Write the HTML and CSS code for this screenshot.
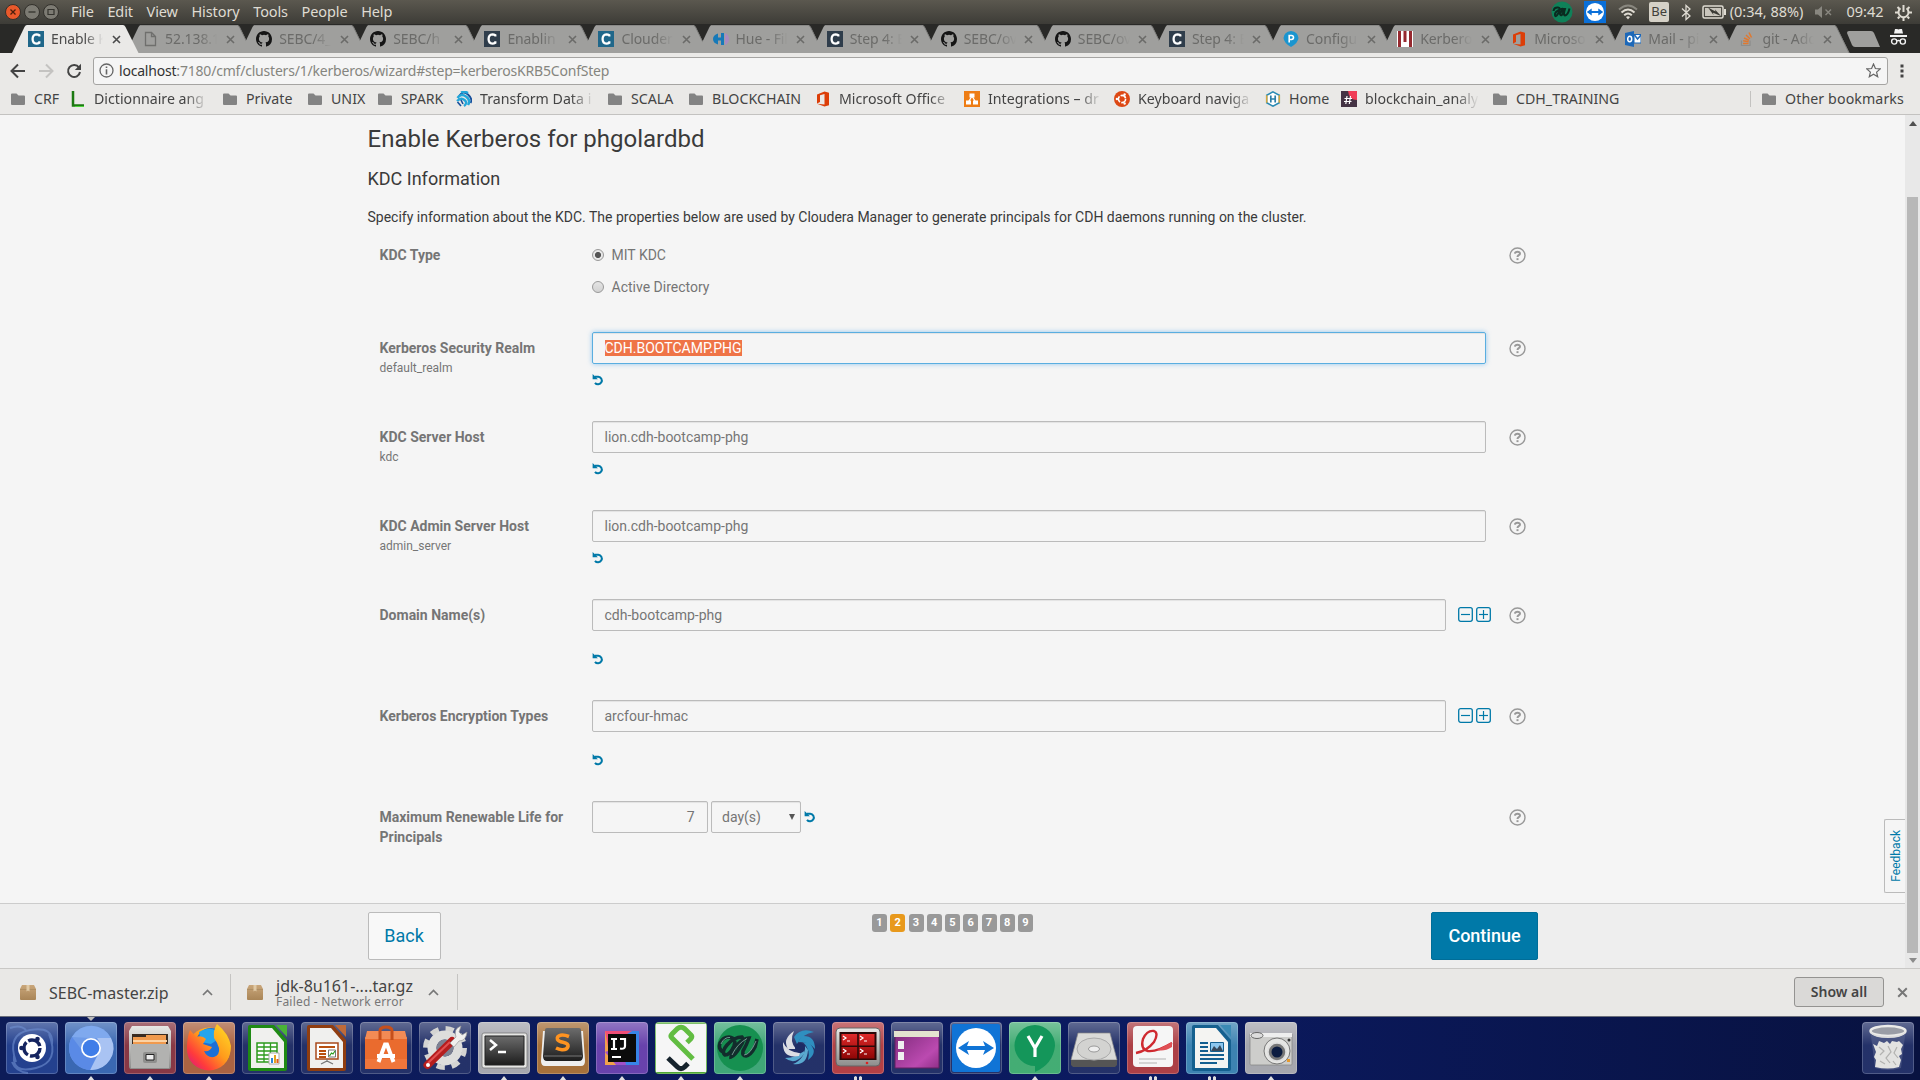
FILE: index.html
```html
<!DOCTYPE html>
<html lang="en">
<head>
<meta charset="utf-8">
<title>Enable Kerberos</title>
<link rel="stylesheet" href="styles.css">
</head>
<body>
<svg class="defs" aria-hidden="true">
  <defs>
    <linearGradient id="metal" x1="0" y1="0" x2="0" y2="1"><stop offset="0" stop-color="#e8e8e6"/><stop offset="1" stop-color="#8d8d8b"/></linearGradient>
    <linearGradient id="dark" x1="0" y1="0" x2="0" y2="1"><stop offset="0" stop-color="#6c6c6c"/><stop offset="1" stop-color="#1d1d1d"/></linearGradient>
    <linearGradient id="fox" x1="1" y1="0" x2="0" y2="1"><stop offset="0" stop-color="#ffe226"/><stop offset=".45" stop-color="#ff9a1c"/><stop offset=".75" stop-color="#ff3b3b"/><stop offset="1" stop-color="#d2118f"/></linearGradient>
    <linearGradient id="desk" x1="0" y1="0" x2="1" y2="1"><stop offset="0" stop-color="#7e2a7a"/><stop offset=".7" stop-color="#bb4ab0"/><stop offset="1" stop-color="#8f2f88"/></linearGradient>
    <linearGradient id="box" x1="0" y1="0" x2="0" y2="1"><stop offset="0" stop-color="#c9a67a"/><stop offset="1" stop-color="#a98557"/></linearGradient>
    <linearGradient id="red" x1="0" y1="0" x2="0" y2="1"><stop offset="0" stop-color="#e02a2a"/><stop offset="1" stop-color="#8e0606"/></linearGradient>
  </defs>
  <symbol id="tab" viewBox="0 0 127 28"><path d="M0 28 12.500 2Q13.500 0 15 0H111Q112.500 0 113.500 2L126.500 28Z" fill="#9f9f9d"/><path d="M111 .5Q112.500.5 113.500 2L126 28" fill="none" stroke="#7f7f7d"/><path d="M14 .5H112" stroke="#8a8a88"/></symbol>
  <symbol id="tab-on" viewBox="0 0 127 28"><path d="M0 28 12.500 2Q13.500 0 15 0H111Q112.500 0 113.500 2L126.500 28Z" fill="#eae9e7"/></symbol>
  <symbol id="x" viewBox="0 0 9 9"><path d="M1 1 8 8M8 1 1 8" fill="none" stroke="currentColor" stroke-width="1.600"/></symbol>
  <symbol id="folder" viewBox="0 0 16 16"><path d="M1 3.500Q1 2.500 2 2.500H6.500L8.500 4.500H14Q15 4.500 15 5.500V13Q15 14 14 14H2Q1 14 1 13Z" fill="#838383"/></symbol>
  <symbol id="cloudera" viewBox="0 0 16 16"><path d="M0 0H16V16H0Z" fill="currentColor"/><path d="M11.300 5.600V4.200Q10 3.300 8.400 3.300 4.600 3.600 4.600 8T8.400 12.700Q10 12.700 11.300 11.800V10.300" fill="none" stroke="#fff" stroke-width="2.300"/></symbol>
  <symbol id="github" viewBox="0 0 16 16"><path fill="#151515" d="M8 0C3.580 0 0 3.580 0 8c0 3.540 2.290 6.530 5.470 7.590.4.070.55-.17.55-.38 0-.19-.01-.82-.01-1.490-2.010.37-2.530-.49-2.690-.94-.09-.23-.48-.94-.82-1.130-.28-.15-.68-.52-.01-.53.63-.01 1.080.58 1.230.82.72 1.210 1.870.87 2.330.66.07-.52.28-.87.51-1.070-1.780-.2-3.640-.89-3.640-3.950 0-.87.31-1.590.82-2.150-.08-.2-.36-1.020.08-2.120 0 0 .67-.21 2.200.82a7.600 7.600 0 0 1 4 0c1.530-1.040 2.200-.82 2.200-.82.44 1.100.16 1.920.08 2.120.51.56.82 1.270.82 2.150 0 3.070-1.870 3.750-3.650 3.950.29.25.54.73.54 1.480 0 1.070-.01 1.930-.01 2.200 0 .21.15.46.55.38A8.010 8.010 0 0 0 16 8c0-4.420-3.580-8-8-8z"/></symbol>
  <symbol id="office" viewBox="0 0 16 16"><path d="M2 3.500 9.500.5 14 1.800V14.300L9.500 15.500 2 12.700 9.500 13.500V3L5 4.200V11L2 12.400Z" fill="#dc3e08"/></symbol>
  <symbol id="undo" viewBox="0 0 12 12"><path d="M2.800 3.200H6.300A3.800 3.800 0 1 1 3 9.300" fill="none" stroke="#0079a8" stroke-width="2"/><path d="M.6.500V5.800H5.900Z" fill="#0079a8"/></symbol>
  <symbol id="help" viewBox="0 0 17 17"><circle cx="8.500" cy="8.500" r="7.500" fill="none" stroke="#999" stroke-width="1.400"/><path d="M5.900 6.700Q6.200 4.700 8.500 4.700T11 6.500Q11 7.500 9.700 8.200 8.500 8.900 8.500 10" fill="none" stroke="#999" stroke-width="2"/><path d="M7.500 11.200H9.500V13.100H7.500Z" fill="#999"/></symbol>
  <symbol id="minus" viewBox="0 0 15 15"><rect x=".7" y=".7" width="13.600" height="13.600" rx="2" fill="none" stroke="#0079a8" stroke-width="1.300"/><path d="M3 7.500H12" stroke="#0079a8" stroke-width="1.200"/></symbol>
  <symbol id="plus" viewBox="0 0 15 15"><use href="#minus"/><path d="M7.500 3V12" stroke="#0079a8" stroke-width="1.200"/></symbol>
  <symbol id="package" viewBox="0 0 16 15"><path d="M2 0H14L16 4V14Q16 15 15 15H1Q0 15 0 14V4Z" fill="url(#box)"/><path d="M0 4.500H16" stroke="#a5865c" stroke-width=".6"/><path d="M6.500 0H9.500V6.500L8 5.500 6.500 6.500Z" fill="#e0c9a5"/></symbol>
  <symbol id="caret" viewBox="0 0 11 7"><path d="M1 6 5.500 1.500 10 6" fill="none" stroke="#777" stroke-width="1.700"/></symbol>
  <symbol id="tv" viewBox="0 0 20 20"><path d="M0 0H20V20H0Z" fill="#0a6fd8"/><circle cx="10" cy="10" r="8.200" fill="#fff"/><path d="M2.500 10 7 6.800V9H13V6.800L17.500 10 13 13.200V11H7V13.200Z" fill="#0a6fd8"/></symbol>
</svg>

<div class="screen">
  <header class="menubar">
    <div class="win-buttons">
      <svg width="16" height="16" viewBox="0 0 16 16"><circle cx="8" cy="8" r="7.500" fill="#e9592b" stroke="#33312c"/><path d="M5.500 5.500 10.500 10.500M10.500 5.500 5.500 10.500" stroke="#4a1e0c" stroke-width="1.300"/></svg>
      <svg width="16" height="16" viewBox="0 0 16 16"><circle cx="8" cy="8" r="7.500" fill="#7d7b73" stroke="#33312c"/><path d="M4.500 8H11.500" stroke="#34332e" stroke-width="1.300"/></svg>
      <svg width="16" height="16" viewBox="0 0 16 16"><circle cx="8" cy="8" r="7.500" fill="#7d7b73" stroke="#33312c"/><path d="M5 5.500H11V10.500H5Z" fill="none" stroke="#34332e" stroke-width="1.200"/></svg>
    </div>
    <nav class="menus"><span>File</span><span>Edit</span><span>View</span><span>History</span><span>Tools</span><span>People</span><span>Help</span></nav>
    <div class="indicators">
      <svg width="22" height="22" viewBox="0 0 22 22"><circle cx="11" cy="11" r="10.500" fill="#0f8159"/><path d="M2.500 10Q3 6 7 6.500 10.500 7 7.500 12T4 14Q3.500 11 9 8.500T12 12Q10.500 16 9 13 11.500 7.500 14 8 12 14 14 14.500 17 14 18.500 7.500" fill="none" stroke="#0a2a20" stroke-width="2"/></svg>
      <svg width="22" height="22"><use href="#tv"/></svg>
      <svg width="20" height="16" viewBox="0 0 20 16"><g fill="none" stroke-width="1.900"><path d="M1 5.500Q10-2.500 19 5.500" stroke="#89877f"/><path d="M3.500 8.500Q10 2.500 16.500 8.500M6.200 11.300Q10 7.600 13.800 11.300" stroke="#dfdbd2"/></g><path d="M8 13Q10 11.400 12 13L10 15.500Z" fill="#dfdbd2"/></svg>
      <span class="kbd">Be</span>
      <svg width="10" height="17" viewBox="0 0 10 17"><path d="M1 4.500 9 12 5 15.500V1.500L9 5 1 12.500" fill="none" stroke="#dfdbd2" stroke-width="1.300"/></svg>
      <svg width="24" height="14" viewBox="0 0 24 14"><rect x="1" y="1" width="20" height="12" rx="1.500" fill="none" stroke="#dfdbd2" stroke-width="1.500"/><path d="M22 4V10H24V4Z" fill="#dfdbd2"/><path d="M3 3H19V11H3Z" fill="#c9c5bc"/><path d="M6 2.500 13.500 6.500 13 4.500 19 11 11 7.800 11.500 10Z" fill="#3a3934"/></svg>
      <span class="battery">(0:34, 88%)</span>
      <svg class="mute" width="18" height="14" viewBox="0 0 18 14"><path d="M0 4.500H3L7 1V13L3 9.500H0Z" fill="#898780"/><path d="M10.500 4.500 16 10M16 4.500 10.500 10" stroke="#898780" stroke-width="1.400"/></svg>
      <span class="clock">09:42</span>
      <svg width="17" height="17" viewBox="0 0 17 17"><path d="M8.500 1V8" stroke="#dfdbd2" stroke-width="2"/><path d="M5.500 4.300A5 5 0 1 0 11.500 4.300" fill="none" stroke="#dfdbd2" stroke-width="2"/><path d="M0 8.500H3.500M13.500 8.500H17M2.500 3 4.300 4.800M14.500 3 12.700 4.800M2.800 14.500 4.500 12.700M14.200 14.500 12.500 12.700M8.500 13.500V17" stroke="#dfdbd2" stroke-width="2"/></svg>
    </div>
  </header>

  <div class="tabstrip">
    <div class="tab active"><svg class="shape"><use href="#tab-on"/></svg><svg class="fav c-blue"><use href="#cloudera"/></svg><span>Enable K</span><svg class="close"><use href="#x"/></svg></div>
    <div class="tab"><svg class="shape"><use href="#tab"/></svg><svg class="fav" viewBox="0 0 16 16"><path d="M3.500 1.500H9.500L13.500 5.500V14.500H3.500ZM9.500 1.500V5.500H13.500" fill="none" stroke="#6f6f6d" stroke-width="1.300"/></svg><span>52.138.1</span><svg class="close"><use href="#x"/></svg></div>
    <div class="tab"><svg class="shape"><use href="#tab"/></svg><svg class="fav"><use href="#github"/></svg><span>SEBC/4_</span><svg class="close"><use href="#x"/></svg></div>
    <div class="tab"><svg class="shape"><use href="#tab"/></svg><svg class="fav"><use href="#github"/></svg><span>SEBC/h</span><svg class="close"><use href="#x"/></svg></div>
    <div class="tab"><svg class="shape"><use href="#tab"/></svg><svg class="fav c-dark"><use href="#cloudera"/></svg><span>Enablin</span><svg class="close"><use href="#x"/></svg></div>
    <div class="tab"><svg class="shape"><use href="#tab"/></svg><svg class="fav c-blue"><use href="#cloudera"/></svg><span>Clouder</span><svg class="close"><use href="#x"/></svg></div>
    <div class="tab"><svg class="shape"><use href="#tab"/></svg><svg class="fav" viewBox="0 0 16 16"><path d="M5 2.500Q0 4 0 8T5 13.500V9.500H8V14H11V2H8V6.500H5Z" fill="#1679b8"/><path d="M12 2Q16 4 16 8T12 14Z" fill="#a98bc0"/></svg><span>Hue - Fil</span><svg class="close"><use href="#x"/></svg></div>
    <div class="tab"><svg class="shape"><use href="#tab"/></svg><svg class="fav c-dark"><use href="#cloudera"/></svg><span>Step 4: E</span><svg class="close"><use href="#x"/></svg></div>
    <div class="tab"><svg class="shape"><use href="#tab"/></svg><svg class="fav"><use href="#github"/></svg><span>SEBC/ov</span><svg class="close"><use href="#x"/></svg></div>
    <div class="tab"><svg class="shape"><use href="#tab"/></svg><svg class="fav"><use href="#github"/></svg><span>SEBC/ov</span><svg class="close"><use href="#x"/></svg></div>
    <div class="tab"><svg class="shape"><use href="#tab"/></svg><svg class="fav c-dark"><use href="#cloudera"/></svg><span>Step 4: E</span><svg class="close"><use href="#x"/></svg></div>
    <div class="tab"><svg class="shape"><use href="#tab"/></svg><svg class="fav" viewBox="0 0 16 16"><path d="M8 0Q15 1 15.500 7 15 12 8 16 1 12 .5 7 1 1 8 0Z" fill="#1b95cf"/><path d="M6.200 11.500V4.500H8.500Q10.500 4.700 10.500 6.500T8.500 8.500H6.500" fill="none" stroke="#fff" stroke-width="1.600"/></svg><span>Configu</span><svg class="close"><use href="#x"/></svg></div>
    <div class="tab"><svg class="shape"><use href="#tab"/></svg><svg class="fav" viewBox="0 0 16 16"><path d="M0 0H16V16H0Z" fill="#fff"/><path d="M1 0H4V16H1ZM6.500 0H9.500V11H6.500ZM12 0H15V16H12Z" fill="#96292f"/></svg><span>Kerbero</span><svg class="close"><use href="#x"/></svg></div>
    <div class="tab"><svg class="shape"><use href="#tab"/></svg><svg class="fav"><use href="#office"/></svg><span>Microso</span><svg class="close"><use href="#x"/></svg></div>
    <div class="tab"><svg class="shape"><use href="#tab"/></svg><svg class="fav" viewBox="0 0 16 16"><path d="M0 2 9 0V16L0 14Z" fill="#1d68b8"/><path d="M9 3.500H16V12H9Z" fill="#fff" stroke="#1d68b8"/><path d="M9.500 4 12.500 8 16 4" fill="none" stroke="#1d68b8" stroke-width="1.500"/><ellipse cx="4.700" cy="8" rx="2" ry="2.700" fill="none" stroke="#fff" stroke-width="1.500"/></svg><span>Mail - pi</span><svg class="close"><use href="#x"/></svg></div>
    <div class="tab"><svg class="shape"><use href="#tab"/></svg><svg class="fav" viewBox="0 0 16 16"><path d="M2.500 9.500V14.500H11V9.500" fill="none" stroke="#8d8d8b" stroke-width="1.200"/><path d="M4 12.500H9.500M4.200 9.800 9.600 10.700M5 7 10 9.300M7 4 11 7.800M10 1.500 12.500 6.500" stroke="#e0782f" stroke-width="1.500"/></svg><span>git - Add</span><svg class="close"><use href="#x"/></svg></div>
    <svg class="newtab" width="33" height="16" viewBox="0 0 33 16"><path d="M2 0H24Q26 0 27 2L33 16H8Q6 16 5 14L0 2Q0 0 2 0Z" fill="#9f9f9d"/></svg>
    <svg class="incognito" width="17" height="18" viewBox="0 0 17 18"><path d="M5 1H7L8.500 1.500 10 1H12L13 5.500H4ZM0 7H17V9H0Z" fill="#f2f2f2"/><g fill="none" stroke="#f2f2f2" stroke-width="1.400"><circle cx="4.200" cy="13.500" r="2.600"/><circle cx="12.800" cy="13.500" r="2.600"/><path d="M6.800 13Q8.500 12 10.200 13"/></g></svg>
  </div>

  <div class="toolbar">
    <svg width="16" height="16" viewBox="0 0 16 16"><path d="M15 8H2M8 1.500 1.500 8 8 14.500" fill="none" stroke="#444" stroke-width="2"/></svg>
    <svg width="16" height="16" viewBox="0 0 16 16"><path d="M1 8H14M8 1.500 14.500 8 8 14.500" fill="none" stroke="#c4c3c1" stroke-width="2"/></svg>
    <svg width="16" height="16" viewBox="0 0 16 16"><path d="M13 4.500A6 6 0 1 0 14 9" fill="none" stroke="#444" stroke-width="2"/><path d="M15 .8V7H8.800Z" fill="#444"/></svg>
    <div class="omnibox">
      <svg width="15" height="15" viewBox="0 0 15 15"><circle cx="7.500" cy="7.500" r="6.500" fill="none" stroke="#666" stroke-width="1.300"/><path d="M6.700 3.500H8.300V5H6.700ZM6.700 6.300H8.300V11.500H6.700Z" fill="#666"/></svg>
      <span class="url"><b>localhost</b>:7180/cmf/clusters/1/kerberos/wizard#step=kerberosKRB5ConfStep</span>
      <svg width="15" height="15" viewBox="0 0 15 15"><path d="M7.500 1 9.400 5.500 14.200 5.900 10.600 9.100 11.700 13.800 7.500 11.300 3.300 13.800 4.400 9.100.8 5.900 5.600 5.500Z" fill="none" stroke="#666" stroke-width="1.200"/></svg>
    </div>
    <svg class="more" width="4" height="16" viewBox="0 0 4 16"><path d="M.5 1.500H3.500V4.500H.5ZM.5 6.500H3.500V9.500H.5ZM.5 11.500H3.500V14.500H.5Z" fill="#444"/></svg>
  </div>

  <div class="bookmarks">
    <div class="bm"><svg><use href="#folder"/></svg><span>CRF</span></div>
    <div class="bm"><svg viewBox="0 0 16 16"><path d="M3 0V14.500H14" fill="none" stroke="#1c7a12" stroke-width="2.500"/><path d="M5 15.500H14" stroke="#4cd63a"/></svg><span class="cut">Dictionnaire ang</span></div>
    <div class="bm"><svg><use href="#folder"/></svg><span>Private</span></div>
    <div class="bm"><svg><use href="#folder"/></svg><span>UNIX</span></div>
    <div class="bm"><svg><use href="#folder"/></svg><span>SPARK</span></div>
    <div class="bm"><svg viewBox="0 0 16 16"><path d="M3 5Q7-1 12 3.500T14.500 12" fill="none" stroke="#174f9b" stroke-width="1.800"/><path d="M1.500 7Q5 2 10 5.500T12 14M1 10Q5 6 8.500 9T8 15M5 1.500Q9 0 12 2" fill="none" stroke="#23a6d9" stroke-width="2.400"/><path d="M1.500 11 5 15M5 9 7 13" stroke="#174f9b" stroke-width="1.600"/></svg><span class="cut">Transform Data i</span></div>
    <div class="bm"><svg><use href="#folder"/></svg><span>SCALA</span></div>
    <div class="bm"><svg><use href="#folder"/></svg><span>BLOCKCHAIN</span></div>
    <div class="bm"><svg><use href="#office"/></svg><span class="cut">Microsoft Office</span></div>
    <div class="bm"><svg viewBox="0 0 16 16"><path d="M0 0H16V16H0Z" fill="#ee7d14"/><path d="M8 5 4.500 11M8 5 11.500 11" stroke="#fff" stroke-width="1.300"/><path d="M5.500 2.500H10.500V6.500H5.500ZM2 9.500H7V13.500H2ZM9 9.500H14V13.500H9Z" fill="#fff"/></svg><span class="cut">Integrations – dr</span></div>
    <div class="bm"><svg viewBox="0 0 16 16"><circle cx="8" cy="8" r="8" fill="#dd4814"/><circle cx="8" cy="8" r="3.600" fill="none" stroke="#fff" stroke-width="1.600" stroke-dasharray="6.300 1.240"/><g fill="#fff"><circle cx="2.900" cy="8" r="1.200"/><circle cx="10.600" cy="3.500" r="1.200"/><circle cx="10.600" cy="12.500" r="1.200"/></g></svg><span class="cut">Keyboard naviga</span></div>
    <div class="bm"><svg viewBox="0 0 16 16"><path d="M8 .8 14.300 4.300V11.700L8 15.200 1.700 11.700V4.300Z" fill="#fff" stroke="#2a8bb4" stroke-width="1.500"/><path d="M1.700 4.300V11.700M14.300 4.300V11.700" stroke="#d7a73c" stroke-width="1.500"/><path d="M5.800 4.500V11.500M10.200 4.500V11.500M5.800 8H10.200" stroke="#2a7ea8" stroke-width="1.700"/></svg><span>Home</span></div>
    <div class="bm"><svg viewBox="0 0 16 16"><path d="M0 0H16V16H0Z" fill="#443344"/><path d="M7 0H16V9Q8 9 7 0Z" fill="#f03b55"/><path d="M6 5 4.800 13M9.500 5 8.300 13M3.500 7.500H11M3 10.500H10.500" stroke="#fff" stroke-width="1.200"/></svg><span class="cut">blockchain_analy</span></div>
    <div class="bm"><svg><use href="#folder"/></svg><span>CDH_TRAINING</span></div>
    <div class="bm other"><svg><use href="#folder"/></svg><span>Other bookmarks</span></div>
  </div>

  <main class="viewport">
    <div class="page">
      <div class="wizard">
        <h1>Enable Kerberos for phgolardbd</h1>
        <h2>KDC Information</h2>
        <p>Specify information about the KDC. The properties below are used by Cloudera Manager to generate principals for CDH daemons running on the cluster.</p>
        <div class="row type">
          <div class="label"><b>KDC Type</b></div>
          <div class="field radios"><div class="radio"><i class="dot on"></i>MIT KDC</div><div class="radio"><i class="dot"></i>Active Directory</div></div>
          <svg class="help"><use href="#help"/></svg>
        </div>
        <div class="row">
          <div class="label"><b>Kerberos Security Realm</b><small>default_realm</small></div>
          <div class="field"><div class="input focus"><mark>CDH.BOOTCAMP.PHG</mark></div><svg class="undo"><use href="#undo"/></svg></div>
          <svg class="help"><use href="#help"/></svg>
        </div>
        <div class="row">
          <div class="label"><b>KDC Server Host</b><small>kdc</small></div>
          <div class="field"><div class="input">lion.cdh-bootcamp-phg</div><svg class="undo"><use href="#undo"/></svg></div>
          <svg class="help"><use href="#help"/></svg>
        </div>
        <div class="row">
          <div class="label"><b>KDC Admin Server Host</b><small>admin_server</small></div>
          <div class="field"><div class="input">lion.cdh-bootcamp-phg</div><svg class="undo"><use href="#undo"/></svg></div>
          <svg class="help"><use href="#help"/></svg>
        </div>
        <div class="row multi">
          <div class="label"><b>Domain Name(s)</b></div>
          <div class="field"><div class="line"><div class="input">cdh-bootcamp-phg</div><svg class="pm"><use href="#minus"/></svg><svg class="pm"><use href="#plus"/></svg></div><svg class="undo"><use href="#undo"/></svg></div>
          <svg class="help"><use href="#help"/></svg>
        </div>
        <div class="row multi">
          <div class="label"><b>Kerberos Encryption Types</b></div>
          <div class="field"><div class="line"><div class="input">arcfour-hmac</div><svg class="pm"><use href="#minus"/></svg><svg class="pm"><use href="#plus"/></svg></div><svg class="undo"><use href="#undo"/></svg></div>
          <svg class="help"><use href="#help"/></svg>
        </div>
        <div class="row last">
          <div class="label"><b>Maximum Renewable Life for Principals</b></div>
          <div class="field life"><div class="input num">7</div><div class="input select">day(s)<svg width="6" height="6" viewBox="0 0 6 6"><path d="M0 0H6L3 6Z" fill="#555"/></svg></div><svg class="undo"><use href="#undo"/></svg></div>
          <svg class="help"><use href="#help"/></svg>
        </div>
      </div>
      <div class="feedback">Feedback</div>
      <footer class="wizard-footer">
        <div class="btn back">Back</div>
        <div class="steps"><span>1</span><span class="cur">2</span><span>3</span><span>4</span><span>5</span><span>6</span><span>7</span><span>8</span><span>9</span></div>
        <div class="btn next">Continue</div>
      </footer>
    </div>
    <div class="scrollbar">
      <svg width="8" height="5" viewBox="0 0 8 5"><path d="M0 5 4 0 8 5Z" fill="#505050"/></svg>
      <div class="thumb"></div>
      <svg width="8" height="5" viewBox="0 0 8 5"><path d="M0 0 4 5 8 0Z" fill="#8b8b8b"/></svg>
    </div>
  </main>

  <div class="downloads">
    <div class="dl first"><svg width="16" height="15"><use href="#package"/></svg><div class="name">SEBC-master.zip</div><svg width="11" height="7"><use href="#caret"/></svg></div>
    <div class="dl second"><svg width="16" height="15"><use href="#package"/></svg><div class="name">jdk-8u161-....tar.gz<small>Failed - Network error</small></div><svg width="11" height="7"><use href="#caret"/></svg></div>
    <div class="showall">Show all</div>
    <svg class="dlx" width="11" height="11"><use href="#x"/></svg>
  </div>

  <div class="launcher">
    <div class="tile t-dash"><svg viewBox="0 0 52 52"><g fill="none" stroke="#6f8fd0" stroke-width="2" opacity=".6"><path d="M10 40Q0 12 24 8T46 22M43 12Q54 40 30 46T8 34M4 6Q14 2 20 8M22 51Q10 50 6 40"/></g><circle cx="26" cy="26" r="14" fill="#fff"/><circle cx="26" cy="26" r="8" fill="none" stroke="#14235f" stroke-width="3.400" stroke-dasharray="14.500 2.250"/><g fill="#14235f"><circle cx="15.500" cy="26" r="2.300"/><circle cx="31.500" cy="17" r="2.300"/><circle cx="31.500" cy="35" r="2.300"/></g></svg></div>
    <div class="tile t-chromium run opened"><svg viewBox="0 0 52 52"><circle cx="26" cy="26" r="22" fill="#6e9be8"/><path d="M7 15A22 22 0 0 1 46 16H26Z" fill="#7fa9ee"/><path d="M46 16A22 22 0 0 1 25 48L34 31Q38 24 32 16Z" fill="#a9c3f3"/><path d="M7 15A22 22 0 0 0 25 48L31 35Q18 37 16 27Z" fill="#5a8ae6"/><circle cx="26" cy="26" r="10" fill="#fff"/><circle cx="26" cy="26" r="8.300" fill="#3f7de8"/></svg></div>
    <div class="tile t-files run"><svg viewBox="0 0 52 52"><path d="M8 4H44L47 9V44Q47 47 45 47H7Q5 47 5 44V9Z" fill="url(#metal)"/><path d="M8 12H44V24H8Z" fill="#3a2c22"/><path d="M9 15H22V13H42V24H9Z" fill="#f09a4e"/><path d="M9 18H43V20H9Z" fill="#fbd2a4"/><path d="M7 22H45V46H7Z" fill="#b2b2b0"/><rect x="19" y="30" width="14" height="11" rx="2" fill="#8f8f8d"/><path d="M22 32.500H30V38H22Z" fill="#eee" stroke="#222"/></svg></div>
    <div class="tile t-firefox run"><svg viewBox="0 0 52 52"><circle cx="26" cy="27" r="21.500" fill="url(#fox)"/><circle cx="28" cy="21" r="15" fill="#1b6fd6"/><path d="M16 10Q27 4 33 9L34 18 28 22 18 20Z" fill="#25a5ec"/><path d="M7 8 13 15Q19 13 23 17L20 22 29 25Q27 30 21 29 24 36 31 35 37 33 36 26 34 20 31 16 30 8 34 2 46 12 48 24 47 44 27 48 4 46 4 26 4 15 7 8Z" fill="url(#fox)"/></svg></div>
    <div class="tile t-glass"><svg viewBox="0 0 52 52"><path d="M6 5Q6 3 8 3H32L45 18V47Q45 49 43 49H8Q6 49 6 47Z" fill="#1f8a14"/><path d="M34 3H45V15Z" fill="#49b336"/><path d="M9 6H30L42 20V46H9Z" fill="#f0f0ee"/><path d="M15 21H35V40H15Z" fill="#fff" stroke="#2c9a1d" stroke-width="1.500"/><path d="M15 25H35M15 29H35M15 33H35M15 37H35M22 21V40M28.500 21V40" stroke="#2c9a1d" stroke-width="1.300"/><path d="M27 31H37V42H27Z" fill="#fff" stroke="#aaa"/><path d="M29 36H31V41H29Z" fill="#2a86d8"/><path d="M32 33H34V41H32Z" fill="#e3a321"/><path d="M34.500 37H36.500V41H34.500Z" fill="#e05a17"/></svg></div>
    <div class="tile t-glass"><svg viewBox="0 0 52 52"><path d="M6 5Q6 3 8 3H32L45 18V47Q45 49 43 49H8Q6 49 6 47Z" fill="#8f3d10"/><path d="M34 3H45V15Z" fill="#bf6a38"/><path d="M9 6H30L42 20V46H9Z" fill="#f0f0ee"/><path d="M15 21H37V37H15Z" fill="#fff" stroke="#a8481a" stroke-width="1.500"/><path d="M18 25H34M18 29H25M18 32H25M18 35H25" stroke="#b9500f" stroke-width="1.800"/><path d="M27.500 28H34.500V35H27.500Z" fill="#fff" stroke="#777"/><path d="M28.500 34 30.500 31 32 32 34 29" fill="none" stroke="#2c9a1d" stroke-width="1.200"/><path d="M26 37V40M20 42 26 39 32 42" fill="none" stroke="#777" stroke-width="1.300"/></svg></div>
    <div class="tile t-glass"><svg viewBox="0 0 52 52"><path d="M5 15H47V47H5Z" fill="#ea6b2e"/><path d="M7 9H45L47 17H5Z" fill="#f28b55"/><path d="M5 37H47V47H5Z" fill="#f0763b"/><path d="M20 18V9Q20 5 26 5T32 9V18" fill="none" stroke="#c64f1b" stroke-width="3"/><path d="M18.500 40 25 22.500H27L33.500 40M17 34H35" fill="none" stroke="#fff" stroke-width="4"/></svg></div>
    <div class="tile t-glass"><svg viewBox="0 0 52 52"><circle cx="26" cy="26" r="19.500" fill="none" stroke="#d4d4d2" stroke-width="5" stroke-dasharray="8.300 7.015"/><circle cx="26" cy="26" r="13" fill="none" stroke="#dededc" stroke-width="9"/><circle cx="26" cy="26" r="8.500" fill="#7d8191"/><path d="M8.500 43 33 19" stroke="#b51d1d" stroke-width="8" stroke-linecap="round"/><path d="M9 41 31 20" stroke="#e25050" stroke-width="2"/><path d="M31 21 37 15Q34 7 42 4L40 10 43 13 48 10Q47 19 40 19L35 25Z" fill="#f0f0ee" stroke="#999" stroke-width=".7"/><circle cx="9" cy="43" r="2" fill="#fff"/></svg></div>
    <div class="tile t-term run"><svg viewBox="0 0 52 52"><rect x="4" y="11" width="45" height="35" rx="2" fill="#e6e6e4" stroke="#777" stroke-width=".8"/><path d="M7 14H46V43H7Z" fill="url(#dark)" stroke="#222"/><path d="M12 18 18 23 12 28M20 30H28" fill="none" stroke="#fff" stroke-width="2.500"/></svg></div>
    <div class="tile t-sublime run"><svg viewBox="0 0 52 52"><path d="M6 9H46L48 39Q48 44 44 44H8Q4 44 4 39Z" fill="#eee"/><path d="M10 6H42Q44 6 44 8L46 34Q46 39 42 39H10Q6 39 6 34L8 8Q8 6 10 6Z" fill="url(#dark)"/><path d="M7 34H45" stroke="#777"/><path d="M32 14.500Q27 12.500 23.500 13.200 19.500 14.200 20.500 17.500 21.500 19.500 26 20.300 31.500 21.500 31 24.500 30 28 25 27.800 22 27.500 19 26" fill="none" stroke="#ff9320" stroke-width="3.600"/></svg></div>
    <div class="tile t-idea run"><svg viewBox="0 0 52 52"><path d="M9 9H26L20 43H9Z" fill="#f0a14b"/><path d="M9 9H36V20L12 25Z" fill="#f04e78"/><path d="M26 15 36 9H43V43H20Z" fill="#3884e8"/><path d="M20 43 9 30 26 24 30 43Z" fill="#a050c8"/><path d="M12 12H40V40H12Z" fill="#0b0b0b"/><path d="M15 17H21M18 17V27M15 27H21M24 17H29V24Q29 27.500 24 26.500M16 35H25" fill="none" stroke="#fff" stroke-width="2.200"/></svg></div>
    <div class="tile t-sourcetree run"><svg viewBox="0 0 52 52"><path d="M1 2H51V50H1Z" fill="#f6f6f6"/><path d="M32 20.500 36 16.500Q37.500 14.500 36 13L30 7Q26 3.500 22 7L17 12Q15 14 17 16L38 37" fill="none" stroke="#62bd42" stroke-width="5"/><path d="M13 36 22.500 45Q26 48.500 29.500 45L33 41.500" fill="none" stroke="#16232c" stroke-width="5"/></svg></div>
    <div class="tile t-w run"><svg viewBox="0 0 52 52"><circle cx="26" cy="26" r="23" fill="#169050"/><path d="M9 30Q4 27 6 21 9 15 15 15 23 16 20 24 16 33 11 33 7 30 13 23 20 15 28 15 31 18 26 25 21 34 17 35 17 31 24 22 30 16 35 16 33 22 29 29 28 34 32 34 37 33 41 25L43 17" fill="none" stroke="#122d2c" stroke-width="3.600"/><path d="M7 22Q10 15 16 15.500M18 33Q23 22 33 16.500M30 33Q36 33 42 19" fill="none" stroke="#7fa39b" stroke-width=".9"/></svg></div>
    <div class="tile t-glass"><svg viewBox="0 0 52 52"><g fill="#2f8fc0"><path d="M21 15Q28 5 41 10 29 12 24 22Z"/><path d="M29 14Q42 13 42 27 36 19 25 20Z"/><path d="M36 21Q46 30 35 38 38 28 30 20Z"/></g><g fill="#5aa9d0"><path d="M35 28Q34 44 20 42 32 37 32 24Z"/><path d="M31 32Q22 44 12 36 24 36 31 28Z"/></g><g fill="#dcdde3"><path d="M26 34Q9 37 10 20 14 30 27 31Z"/><path d="M15 27Q9 17 21 9 16 19 23 27Z"/></g><circle cx="27" cy="26" r="5" fill="#1d2b64"/></svg></div>
    <div class="tile t-terminator run2"><svg viewBox="0 0 52 52"><rect x="4" y="6" width="44" height="38" rx="4" fill="url(#metal)" stroke="#666"/><path d="M7.500 10H44.500V38H7.500Z" fill="#2b0808"/><path d="M9.500 12H25.200V23.500H9.500ZM26.800 12H42.500V23.500H26.800ZM9.500 25H25.200V36.500H9.500ZM26.800 25H42.500V36.500H26.800Z" fill="url(#red)"/><path d="M11 14 14 16 11 18M15 19H18M28 14 31 16 28 18M32 19H35M11 27 14 29 11 31M15 32H18M28 27 31 29 28 31M32 32H35" fill="none" stroke="#fff" stroke-width="1.200"/><circle cx="35" cy="41" r="1.300" fill="#d22"/></svg></div>
    <div class="tile t-glass"><svg viewBox="0 0 52 52"><path d="M4 9H48V46H4Z" fill="url(#desk)" stroke="#612060"/><path d="M3 9H48V15H3Z" fill="#e4e2cf"/><path d="M7 19H13V27H7ZM7 30H13V38H7Z" fill="#efefef"/></svg></div>
    <div class="tile t-glass"><svg viewBox="0 0 52 52"><rect x="2" y="2" width="48" height="48" rx="2" fill="#1074d6"/><circle cx="26" cy="26" r="20" fill="#fff"/><path d="M8 26 19 19 17 24H35L33 19 44 26 33 33 35 28H17L19 33Z" fill="#1074d6"/></svg></div>
    <div class="tile t-yarn run"><svg viewBox="0 0 52 52"><path d="M26 3A20.500 20.500 0 0 1 46 24Q44 42 26 50V44A20.500 20.500 0 1 1 26 3Z" fill="#14965a"/><path d="M19 14 26 26 33 14M26 26V35" fill="none" stroke="#fff" stroke-width="3.200"/></svg></div>
    <div class="tile t-glass"><svg viewBox="0 0 52 52"><path d="M10 11H42L49 38H3Z" fill="#dadad8" stroke="#888" stroke-width=".7"/><path d="M3 38H49V43L47 45H5L3 43Z" fill="#555"/><ellipse cx="26" cy="27" rx="17" ry="11" fill="#d3d3d1" stroke="#aaa"/><ellipse cx="26" cy="27" rx="5.500" ry="3" fill="#eee" stroke="#999"/></svg></div>
    <div class="tile t-pdf run2"><svg viewBox="0 0 52 52"><rect x="6" y="4" width="40" height="41" rx="4" fill="#f6f6f6"/><path d="M9 31Q20 29 27 20 32 11 27 9 20 8 16 17 13 27 21 29 30 30 45 21" fill="none" stroke="#cf2a30" stroke-width="2.400"/><path d="M30 28 45 20V25Q37 30 30 28Z" fill="#e05055"/><path d="M12 37H39M12 41H30" stroke="#c9c9c9" stroke-width="1.500"/></svg></div>
    <div class="tile t-writer run2"><svg viewBox="0 0 52 52"><path d="M6 5Q6 3 8 3H32L45 18V47Q45 49 43 49H8Q6 49 6 47Z" fill="#15608f"/><path d="M34 3H45V15Z" fill="#3a8ab5"/><path d="M9 6H30L42 20V46H9Z" fill="#f4f4f2"/><path d="M14 21H22M14 25H22M14 29H22M14 33H38M14 37H38M14 41H31" stroke="#145f90" stroke-width="2"/><path d="M24.500 20.500H37.500V29.500H24.500Z" fill="#8cc6ee" stroke="#145f90"/><path d="M25 29 28 24 31 27 34 23 37 29Z" fill="#38485a"/></svg></div>
    <div class="tile t-camera run"><svg viewBox="0 0 52 52"><path d="M5 12H47V42Q47 43 46 43H6Q5 43 5 42Z" fill="#cdcdcb" stroke="#888" stroke-width=".8"/><path d="M5 11H47V15H5Z" fill="#eee"/><ellipse cx="12" cy="13.500" rx="6" ry="3" fill="#ddd" stroke="#666"/><circle cx="32" cy="29" r="13" fill="#e6e6e4" stroke="#777"/><circle cx="32" cy="30" r="9" fill="#777" stroke="#ddd" stroke-width="1.500"/><circle cx="32" cy="30" r="5.500" fill="#0c1c40"/><circle cx="44" cy="18" r="1.500" fill="#333"/><path d="M42 37H45V40H42Z" fill="#e79a2d"/></svg></div>
    <div class="tile t-glass trash"><svg viewBox="0 0 52 52"><path d="M8.500 10H43.500L39 46Q26 50 13 46Z" fill="#5b6690" opacity=".55"/><path d="M11 22 15 24 17 19 22 21 25 19 28 22 30 19 35 20 37 19 41 23 39 27 40 32 37 34 39 38 37 45Q26 48 13 45L14 38 12 35 14 30Z" fill="#e3e3e1"/><path d="M17 25 22 29 18 33M26 24 29 30 24 36 28 41M35 25 32 31 36 36M18 39 23 42M31 39 34 43" fill="none" stroke="#b2b2b0" stroke-width="1.200"/><ellipse cx="26" cy="9" rx="17.500" ry="5" fill="#9a9da6" stroke="#ececea" stroke-width="2.500"/><path d="M8.500 9.500Q11 14 26 14T43.500 9.500V11Q40 16 26 16T8.500 11Z" fill="#ddd"/></svg></div>
  </div>
</div>
</body>
</html>
```
FILE: styles.css
```css
* { box-sizing: border-box; }
body { margin: 0; overflow: hidden; font-family: "Noto Sans", "Open Sans", sans-serif; }
svg { display: block; flex: none; }
.defs { position: absolute; width: 0; height: 0; }
.screen { width: 1920px; height: 1080px; display: flex; flex-direction: column; background: #0b1a55; }

/* desktop menu bar */
.menubar { height: 24px; flex: none; display: flex; align-items: center; padding: 0 8px 0 5px; background: linear-gradient(#5b584f, #3d3c37); color: #dfdbd2; font-size: 14.500px; }
.menus, .battery, .clock { padding-bottom: 2px; }
.win-buttons { display: flex; gap: 3px; width: 66px; }
.menus { display: flex; gap: 13.600px; letter-spacing: -.1px; }
.indicators { margin-left: auto; display: flex; align-items: center; gap: 11.500px; }
.kbd { width: 20px; height: 20px; border-radius: 2px; background: #d5d1c7; color: #403f3a; font-size: 13px; line-height: 19px; text-align: center; }
.battery { margin-left: -8px; letter-spacing: 0; }
.clock { margin-left: 2px; }

/* tab strip */
.tabstrip { height: 29px; flex: none; display: flex; background: #292927; padding-left: 12px; border-top: 1px solid #292927; }
.tab { position: relative; width: 114.100px; height: 28px; flex: none; display: flex; align-items: center; padding-left: 16px; color: #6b6b69; font-size: 14px; letter-spacing: -.1px; z-index: 1; }
.tab.active { z-index: 2; color: #4b4b4b; }
.shape { position: absolute; left: 0; top: 0; width: 127px; height: 28px; }
.fav { position: relative; width: 16px; height: 16px; margin-right: 7px; }
.tab span { position: relative; width: 52px; padding-bottom: 2px; overflow: hidden; white-space: nowrap; -webkit-mask-image: linear-gradient(90deg, #000 65%, transparent); mask-image: linear-gradient(90deg, #000 65%, transparent); }
.close { position: relative; width: 9px; height: 9px; margin-left: 8.500px; }
.c-blue { color: #20678a; }
.c-dark { color: #2f3d4b; }
.newtab { margin: 6px 0 0 9px; }
.incognito { margin: 3px 0 0 10px; }

.toolbar { height: 32px; flex: none; display: flex; align-items: center; gap: 12px; padding: 3px 16px 0 10px; background: #eae9e7; }
.omnibox { flex: 1; height: 28px; display: flex; align-items: center; gap: 5px; padding: 0 6px 0 5px; margin-left: -1px; border: 1px solid #a5a4a2; border-radius: 3px; background: #f5f5f5; }
.url { flex: 1; color: #85857f; font-size: 14px; letter-spacing: -.2px; padding-bottom: 1px; }
.url b { font-weight: 400; color: #333; }

.bookmarks { height: 30px; flex: none; display: grid; grid-template-columns: 60px 152px 85px 70px 79px 151px 81px 127px 149px 150px 151px 76px 151px 1fr 170px; padding: 0 0 1px 10px; background: #eae9e7; border-bottom: 1px solid #c3c2c0; color: #444; font-size: 14.200px; }
.bm { display: flex; align-items: center; gap: 8px; min-width: 0; white-space: nowrap; }
.bm span { padding-bottom: 1px; }
.bm svg { width: 16px; height: 16px; }
.cut { width: 114px; overflow: hidden; -webkit-mask-image: linear-gradient(90deg, #000 80%, transparent); mask-image: linear-gradient(90deg, #000 80%, transparent); }
.other { border-left: 1px solid #c3c2c0; height: 16px; align-self: center; padding-left: 10px; letter-spacing: .1px; }

/* web page */
.viewport { height: 853px; flex: none; display: flex; background: #f5f5f5; }
.page { position: relative; width: 1905px; display: flex; flex-direction: column; font-family: Roboto, sans-serif; color: #3a3a3a; font-size: 14px; }
.wizard { flex: 1; padding: 9px 0 0 367.500px; }
h1 { margin: 0; font-size: 24px; font-weight: 400; line-height: 30px; }
h2 { margin: 14px 0 0; font-size: 18px; font-weight: 400; line-height: 22px; }
p { margin: 17px 0 0; line-height: 20px; }
.row { display: grid; grid-template-columns: 212.500px 894px 40px; padding-left: 12px; height: 89px; color: #757575; }
.row.type { height: 93px; margin-top: 12px; padding-top: 8px; }
.row.multi { height: 101px; }
.label { width: 200px; line-height: 20px; padding-top: 6px; }
.label b { display: block; font-weight: 700; }
.label small { display: block; font-size: 12px; line-height: 20px; }
.type .label, .type .radios { padding-top: 0; margin-top: -2px; }
.radio { display: flex; align-items: center; height: 20px; margin-bottom: 12px; }
.dot { width: 12px; height: 12px; border: 1px solid #999; border-radius: 50%; background: linear-gradient(#e4e4e4, #d2d2d2); margin-right: 7.500px; }
.dot.on { background: radial-gradient(circle, #555 0 2.700px, #e8e8e8 3.400px); }
.input { height: 32px; padding: 0 11.500px; border: 1px solid #bbb; border-radius: 2px; box-shadow: inset 0 1px 1px rgba(0, 0, 0, .075); line-height: 31px; }
.focus { border-color: #5aaee0; box-shadow: inset 0 1px 1px rgba(0, 0, 0, .075), 0 0 5px rgba(82, 168, 236, .6); }
mark { background: #ef7447; color: #fff; }
.undo { width: 12px; height: 13px; margin: 9px 0 0 -.5px; }
.line { display: flex; align-items: flex-start; }
.line .input { flex: none; width: 854px; margin-right: 11.500px; }
.pm { width: 15px; height: 15px; margin: 7.500px 3.500px 0 0; }
.multi .undo { margin-top: 20.500px; }
.help { width: 17px; height: 17px; margin: 8px 0 0 23px; }
.type .help { margin-top: 0; }
.life { display: flex; align-items: flex-start; }
.num { width: 116px; text-align: right; padding-right: 12.500px; margin-right: 3px; }
.select { width: 90px; display: flex; align-items: center; justify-content: space-between; padding: 0 5px 0 10px; margin-right: 3px; }
.life .undo { margin: 9px 0 0; }
.feedback { position: absolute; right: 0; top: 704px; width: 21px; height: 74px; border: 1px solid #bbb; border-right: 0; border-radius: 2px 0 0 2px; color: #0079a8; font-size: 12px; line-height: 22px; text-align: center; writing-mode: sideways-lr; }
.wizard-footer { height: 65px; display: flex; justify-content: space-between; align-items: flex-start; padding: 8px 367px 0; border-top: 1px solid #ccc; background: #eee; }
.btn { height: 48px; border-radius: 2px; font-size: 18px; line-height: 46px; text-align: center; border: 1px solid #bbb; }
.back { width: 73px; margin-left: .5px; background: #f8f8f8; color: #0079a8; }
.next { width: 107px; background: #0079a8; color: #fff; border-color: #006d98; font-weight: 500; }
.steps { display: flex; gap: 3.250px; margin: 2px 0 0 33.500px; }
.steps span { width: 15px; height: 18px; border-radius: 3px; background: #999; color: #fff; font-size: 11px; font-weight: 700; line-height: 18px; text-align: center; }
.steps .cur { background: #e8991c; }
.scrollbar { width: 15px; display: flex; flex-direction: column; align-items: center; padding: 6px 0 5px; background: #e8e8e8; }
.thumb { width: 11px; height: 756px; margin: 71px 0 5px; background: #b8b8b8; }

.downloads { height: 49px; flex: none; display: flex; align-items: center; padding-bottom: 1px; background: #e9e8e6; border-top: 1px solid #c9c8c6; border-bottom: 1px solid #6a6e7a; color: #444; }
.dl { height: 36px; display: flex; align-items: center; border-right: 1px solid #c5c4c2; }
.first { width: 231px; padding-left: 20px; }
.second { width: 227px; padding-left: 16px; }
.name { margin-left: 13px; width: 152px; font-size: 16px; line-height: 19px; white-space: nowrap; }
.first .name { padding-top: 3px; width: 153px; }
.name small { display: block; font-size: 12px; line-height: 12px; color: #777; letter-spacing: .2px; }
.showall { width: 90px; height: 30px; margin-left: auto; border: 1px solid #949391; border-radius: 3px; background: #dad9d7; font-size: 14px; font-weight: 600; line-height: 27px; text-align: center; }
.dlx { margin: 0 12px 0 13px; color: #777; }

/* launcher */
.launcher { height: 63px; flex: none; display: flex; gap: 7px; padding: 5px 6px 0; background: linear-gradient(90deg, #0d1c58, #0b1a60 60%, #081240); }
.tile { position: relative; width: 52px; height: 52px; flex: none; border-radius: 4px; box-shadow: inset 0 0 0 1px rgba(255, 255, 255, .2); background-image: linear-gradient(rgba(255, 255, 255, .3), rgba(255, 255, 255, .03) 45%); }
.tile svg { width: 52px; height: 52px; }
.t-dash { background-color: #1d3b8b; }
.t-chromium { background-color: #3463b0; }
.t-files { background-color: #84323f; }
.t-firefox { background-color: #a85e3c; }
.t-glass { background-color: #1d2b64; }
.t-term, .t-camera { background-color: #a3a4ab; }
.t-sublime { background-color: #a36c35; }
.t-idea { background-color: #633caa; }
.t-sourcetree { background-color: #4aa52e; }
.t-w { background-color: #3aa474; }
.t-terminator { background-color: #b13a3f; }
.t-yarn { background-color: #3eaa70; }
.t-pdf { background-color: #a93a40; }
.t-writer { background-color: #377fb0; }
.run::after, .run2::after { content: ""; position: absolute; left: 22px; top: 54px; width: 8px; height: 5px; background: #ddd; clip-path: polygon(50% 0, 100% 100%, 0 100%); }
.run2::after { clip-path: polygon(0 20%, 20% 0, 38% 20%, 38% 100%, 62% 100%, 62% 20%, 80% 0, 100% 20%, 100% 100%, 0 100%); background: linear-gradient(90deg, #ddd 38%, transparent 38% 62%, #ddd 62%); }
.opened::before { content: ""; position: absolute; left: 22px; top: -5px; width: 8px; height: 4px; background: #bbb; clip-path: polygon(0 0, 100% 0, 50% 100%); }
.trash { margin-left: auto; }
```
